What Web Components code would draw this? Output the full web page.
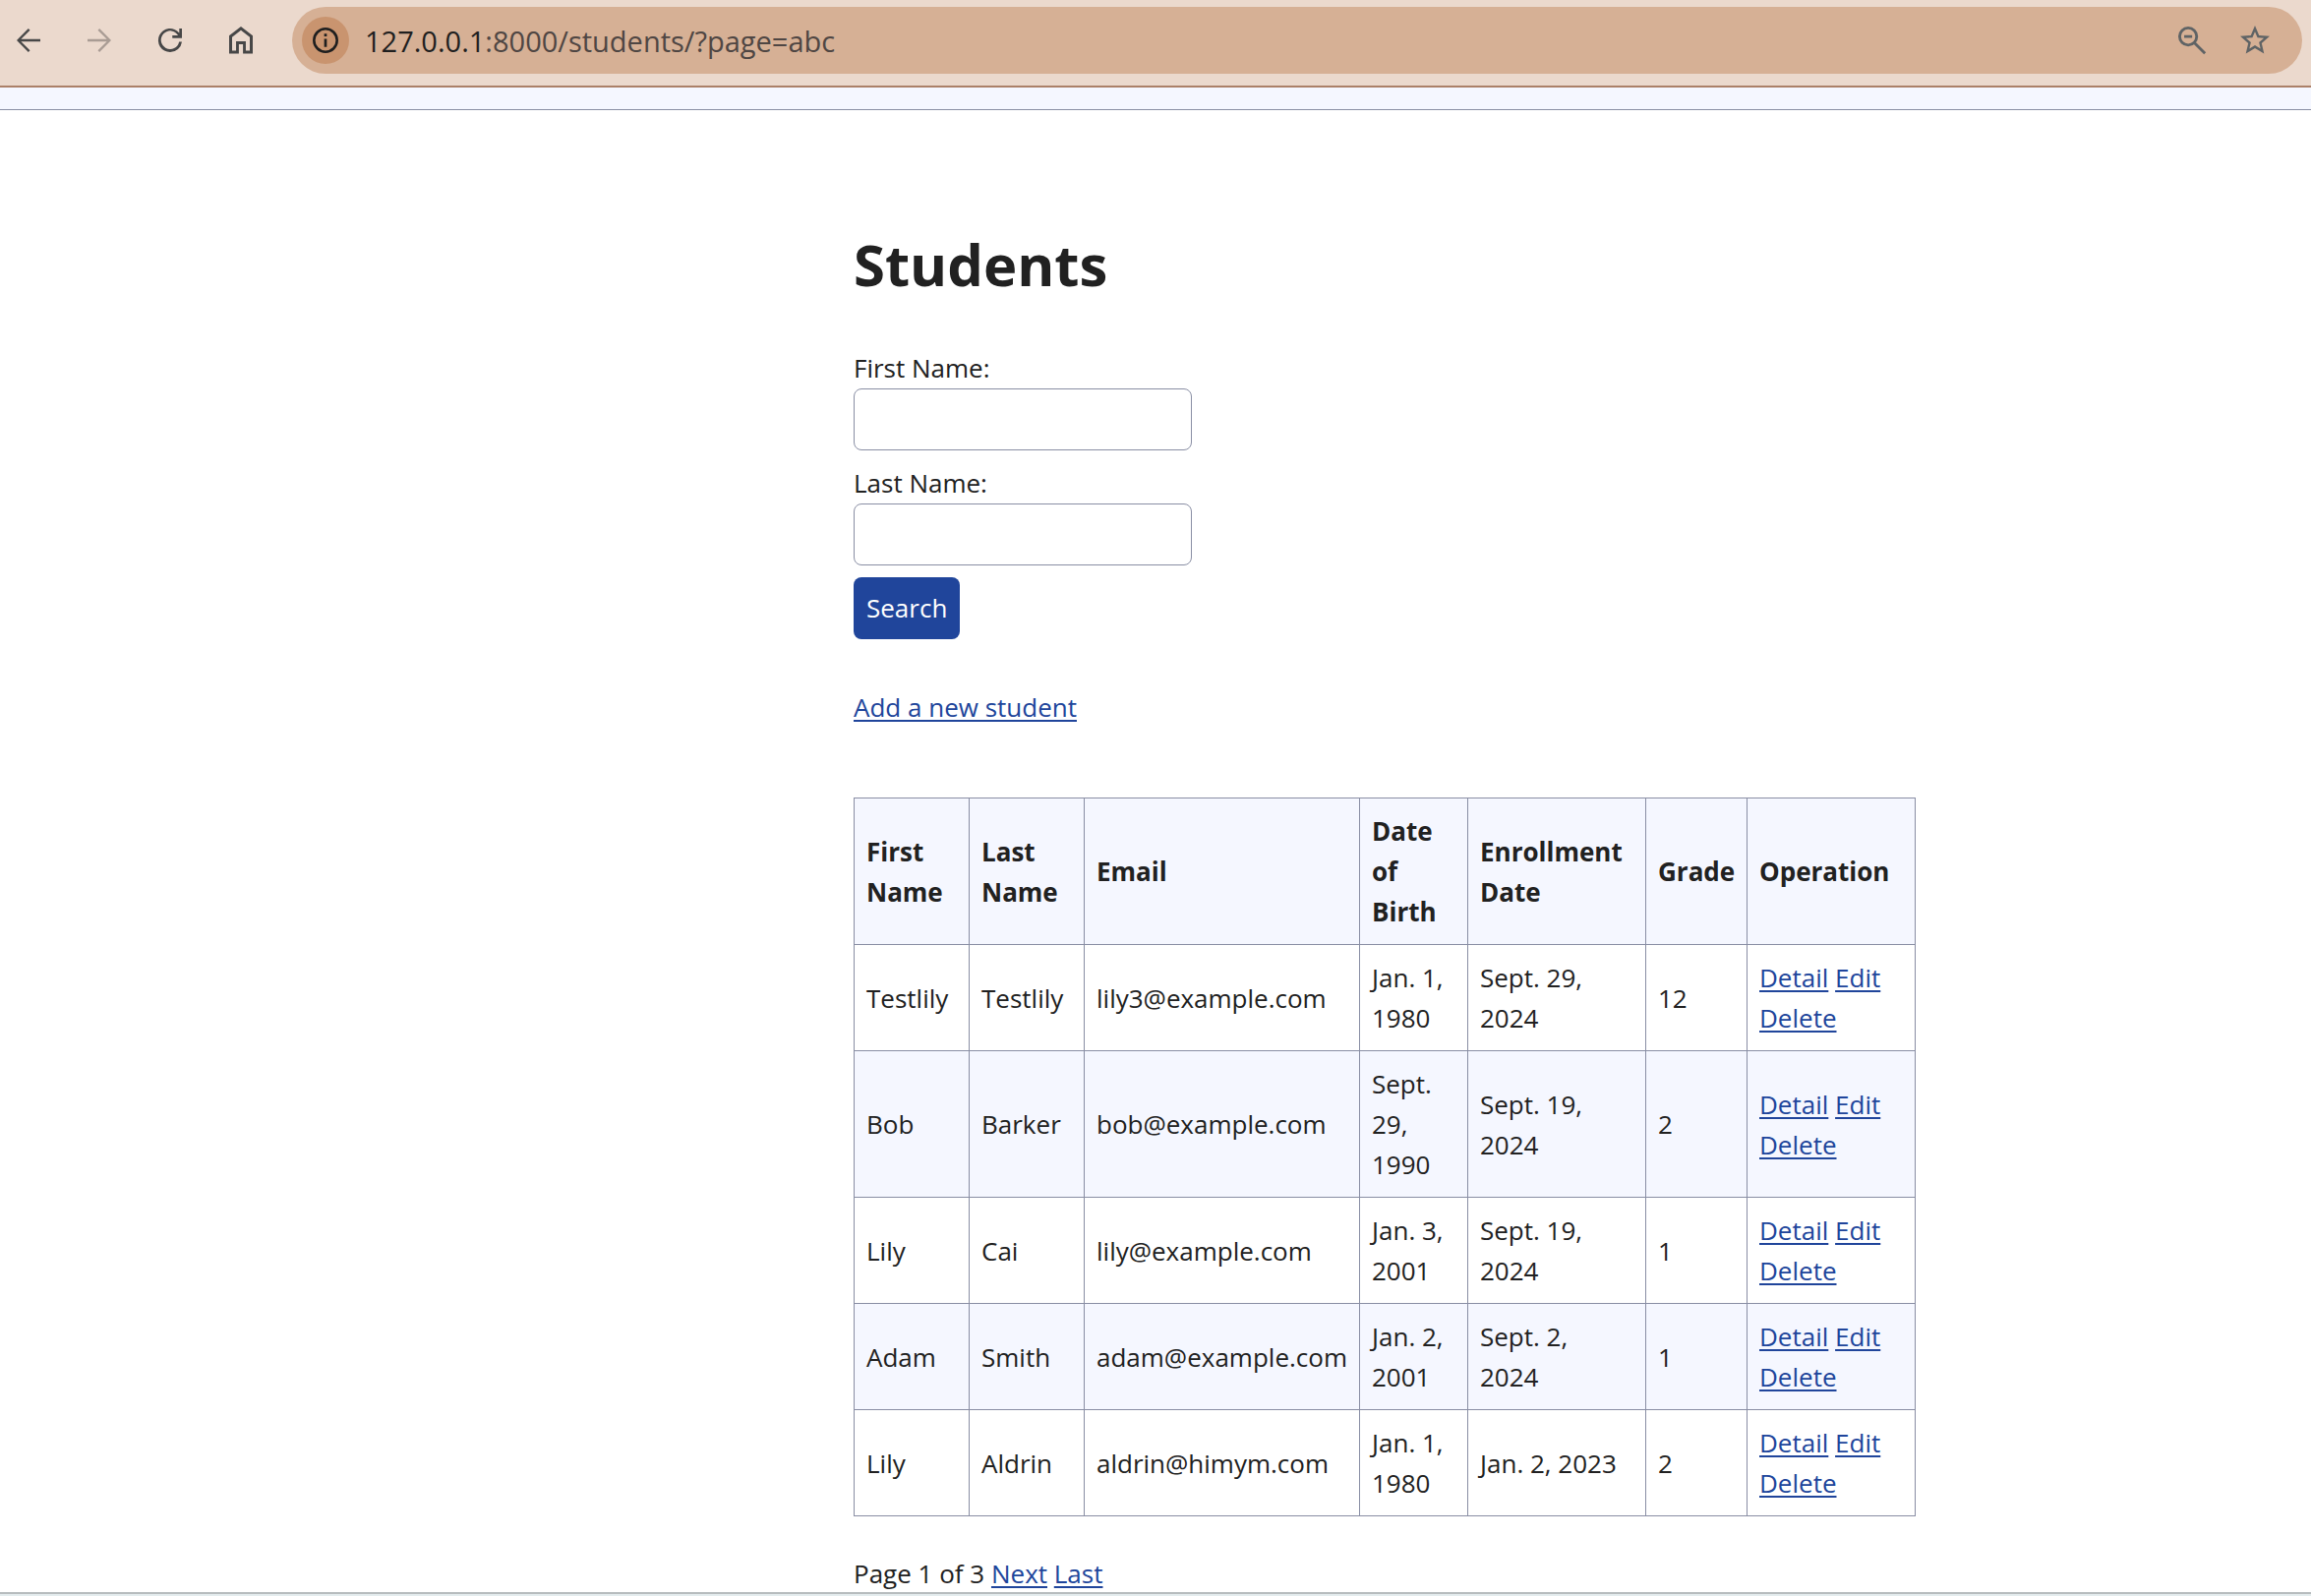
<!DOCTYPE html>
<html lang="en">
<head>
<meta charset="utf-8">
<title>Students</title>
<style>
  body { margin: 0; background: #fff; color: #212121; font: 26px/41px "Open Sans", sans-serif; }
</style>
</head>
<body>
<app-shell>
  <browser-bar slot="bar"></browser-bar>
  <students-page></students-page>
</app-shell>
<script>
const define = (name, html) => customElements.define(name, class extends HTMLElement {
  constructor() {
    super();
    this.attachShadow({ mode: "open" }).innerHTML = html;
  }
});

define("app-shell", `
<style>
  :host { display: flex; flex-direction: column; min-height: 100vh; }
  .band { height: 22px; background: #f5f7ff; border-bottom: 1px solid #898ea4; }
  main { flex: 1; display: grid; grid-template-columns: 868fr minmax(0, 1080px) 402fr; }
  ::slotted(students-page) { grid-column: 2; }
  .edge { height: 2px; background: #e4ecee; border-top: 2px solid #b7bcbe; }
</style>
<slot name="bar"></slot>
<div class="band"></div>
<main><slot></slot></main>
<div class="edge"></div>`);

define("browser-bar", `
<style>
  :host { display: flex; align-items: center; padding: 7px 9px 12px 11px; background: #ebd9cd; border-bottom: 2px solid #ab8068; color: #474747; }
  nav { display: flex; gap: 36px; margin-right: 34px; }
  button { display: grid; place-items: center; padding: 0; border: 0; background: none; color: inherit; width: 36px; height: 36px; }
  svg { width: 36px; height: 36px; display: block; fill: currentColor; }
  button:disabled { color: #a99c94; }
  .field { flex: 1; min-width: 0; display: flex; align-items: center; height: 68px; box-sizing: border-box; padding: 0 30px 0 10px; border-radius: 34px; background: #d6b095; }
  .info { width: 48px; height: 48px; border-radius: 50%; background: #c9946f; color: #1f1f1f; }
  .url { flex: 1; margin-left: 16px; font-size: 29px; color: #4f4643; white-space: nowrap; }
  .url b { font-weight: 400; color: #1f1f1f; }
  .tools { display: flex; gap: 28px; color: #5f6365; }
</style>
<nav>
  <button aria-label="Back"><svg viewBox="0 0 24 24"><path d="M20 11.2H6.9l6.1-6.1L11.9 4 4 12l7.9 8 1.1-1.1-6.1-6.1H20z"/></svg></button>
  <button aria-label="Forward" disabled><svg viewBox="0 0 24 24"><path d="M4 11.2h13.1L11 5.1 12.1 4l7.9 8-7.9 8-1.1-1.1 6.1-6.1H4z"/></svg></button>
  <button aria-label="Reload"><svg viewBox="0 0 24 24"><path d="M12 20a8 8 0 1 1 6.2-13V4H20v6.5h-6.5V8.7h3.9A6.2 6.2 0 1 0 18.1 13H20a8 8 0 0 1-8 7z"/></svg></button>
  <button aria-label="Home"><svg viewBox="0 0 24 24"><path d="M6 19h2.7v-6.4h6.6V19H18V9.8l-6-4.6-6 4.6zM4 21V8.8l8-6.1 8 6.1V21h-6.6v-6.4h-2.8V21z"/></svg></button>
</nav>
<div class="field">
  <button class="info" aria-label="Site information"><svg viewBox="0 0 24 24"><path d="M11.1 11h1.8v5.5h-1.8zM11.1 7.5h1.8v1.8h-1.8z"/><circle cx="12" cy="12" r="7.8" fill="none" stroke="currentColor" stroke-width="1.7"/></svg></button>
  <div class="url"><b>127.0.0.1</b>:8000/students/?page=abc</div>
  <div class="tools">
    <button aria-label="Zoom"><svg viewBox="0 0 24 24"><g fill="none" stroke="currentColor" stroke-width="1.9"><circle cx="9.4" cy="9.4" r="5.8"/><path d="M13.6 13.6l7.2 7.2M6.7 9.4h5.4"/></g></svg></button>
    <button aria-label="Bookmark"><svg viewBox="0 0 24 24"><path d="M22 9.24l-7.19-.62L12 2 9.19 8.63 2 9.24l5.46 4.73L5.82 21 12 17.27 18.18 21l-1.63-7.03L22 9.24zM12 15.4l-3.76 2.27 1-4.28-3.32-2.88 4.38-.38L12 6.1l1.71 4.04 4.38.38-3.32 2.88 1 4.28L12 15.4z"/></svg></button>
  </div>
</div>`);

define("text-field", `
<style>
  :host { display: block; padding-top: 1px; margin-bottom: 12px; }
  label { display: block; }
  input { display: block; box-sizing: border-box; width: 344px; height: 63px; margin: 0; padding: 12px; border: 1px solid #898ea4; border-radius: 8px; background: #fff; font: inherit; color: inherit; }
</style>
<label for="box"><slot></slot></label>
<input id="box" type="text">`);

define("search-form", `
<style>
  :host { display: block; }
  button { display: block; height: 63px; padding: 0 13px; border: 0; border-radius: 8px; background: #20459b; color: #fff; font: inherit; }
</style>
<form>
  <text-field>First Name:</text-field>
  <text-field>Last Name:</text-field>
  <button type="button">Search</button>
</form>`);

const rows = [
  ["Testlily", "Testlily", "lily3@example.com", "Jan. 1, 1980", "Sept. 29, 2024", "12"],
  ["Bob", "Barker", "bob@example.com", "Sept. 29, 1990", "Sept. 19, 2024", "2"],
  ["Lily", "Cai", "lily@example.com", "Jan. 3, 2001", "Sept. 19, 2024", "1"],
  ["Adam", "Smith", "adam@example.com", "Jan. 2, 2001", "Sept. 2, 2024", "1"],
  ["Lily", "Aldrin", "aldrin@himym.com", "Jan. 1, 1980", "Jan. 2, 2023", "2"]
];
const heads = ["First Name", "Last Name", "Email", "Date of Birth", "Enrollment Date", "Grade", "Operation"];
const widths = [117, 117, 280, 110, 181, 103, 171];

define("student-table", `
<style>
  :host { display: block; }
  table { width: 100%; table-layout: fixed; border-collapse: collapse; }
  th, td { border: 1px solid #898ea4; padding: 13px 12px 12px; text-align: left; }
  th:nth-child(5), td:nth-child(5) { padding-right: 20px; }
  th, tr:nth-child(even) td { background: #f5f7ff; }
  a { color: #20459b; text-underline-offset: 3px; text-decoration-thickness: 2px; }
</style>
<table>
  <colgroup>${widths.map(w => `<col style="width:${w}px">`).join("")}</colgroup>
  <thead><tr>${heads.map(h => `<th scope="col">${h}</th>`).join("")}</tr></thead>
  <tbody>${rows.map(r => `<tr>${r.map(c => `<td>${c}</td>`).join("")}<td><a href="#">Detail</a> <a href="#">Edit</a> <a href="#">Delete</a></td></tr>`).join("")}</tbody>
</table>`);

define("students-page", `
<style>
  :host { display: block; }
  h1 { margin: 121px 0 48px; font-size: 58px; line-height: 72px; font-weight: 700; }
  p { margin: 0; }
  .add { margin: 49px 0 71px; }
  .pages { margin-top: 40px; line-height: 36px; }
  a { color: #20459b; text-underline-offset: 3px; text-decoration-thickness: 2px; }
</style>
<h1>Students</h1>
<search-form></search-form>
<p class="add"><a href="#">Add a new student</a></p>
<student-table></student-table>
<p class="pages">Page 1 of 3 <a href="#">Next</a> <a href="#">Last</a></p>`);
</script>
</body>
</html>
